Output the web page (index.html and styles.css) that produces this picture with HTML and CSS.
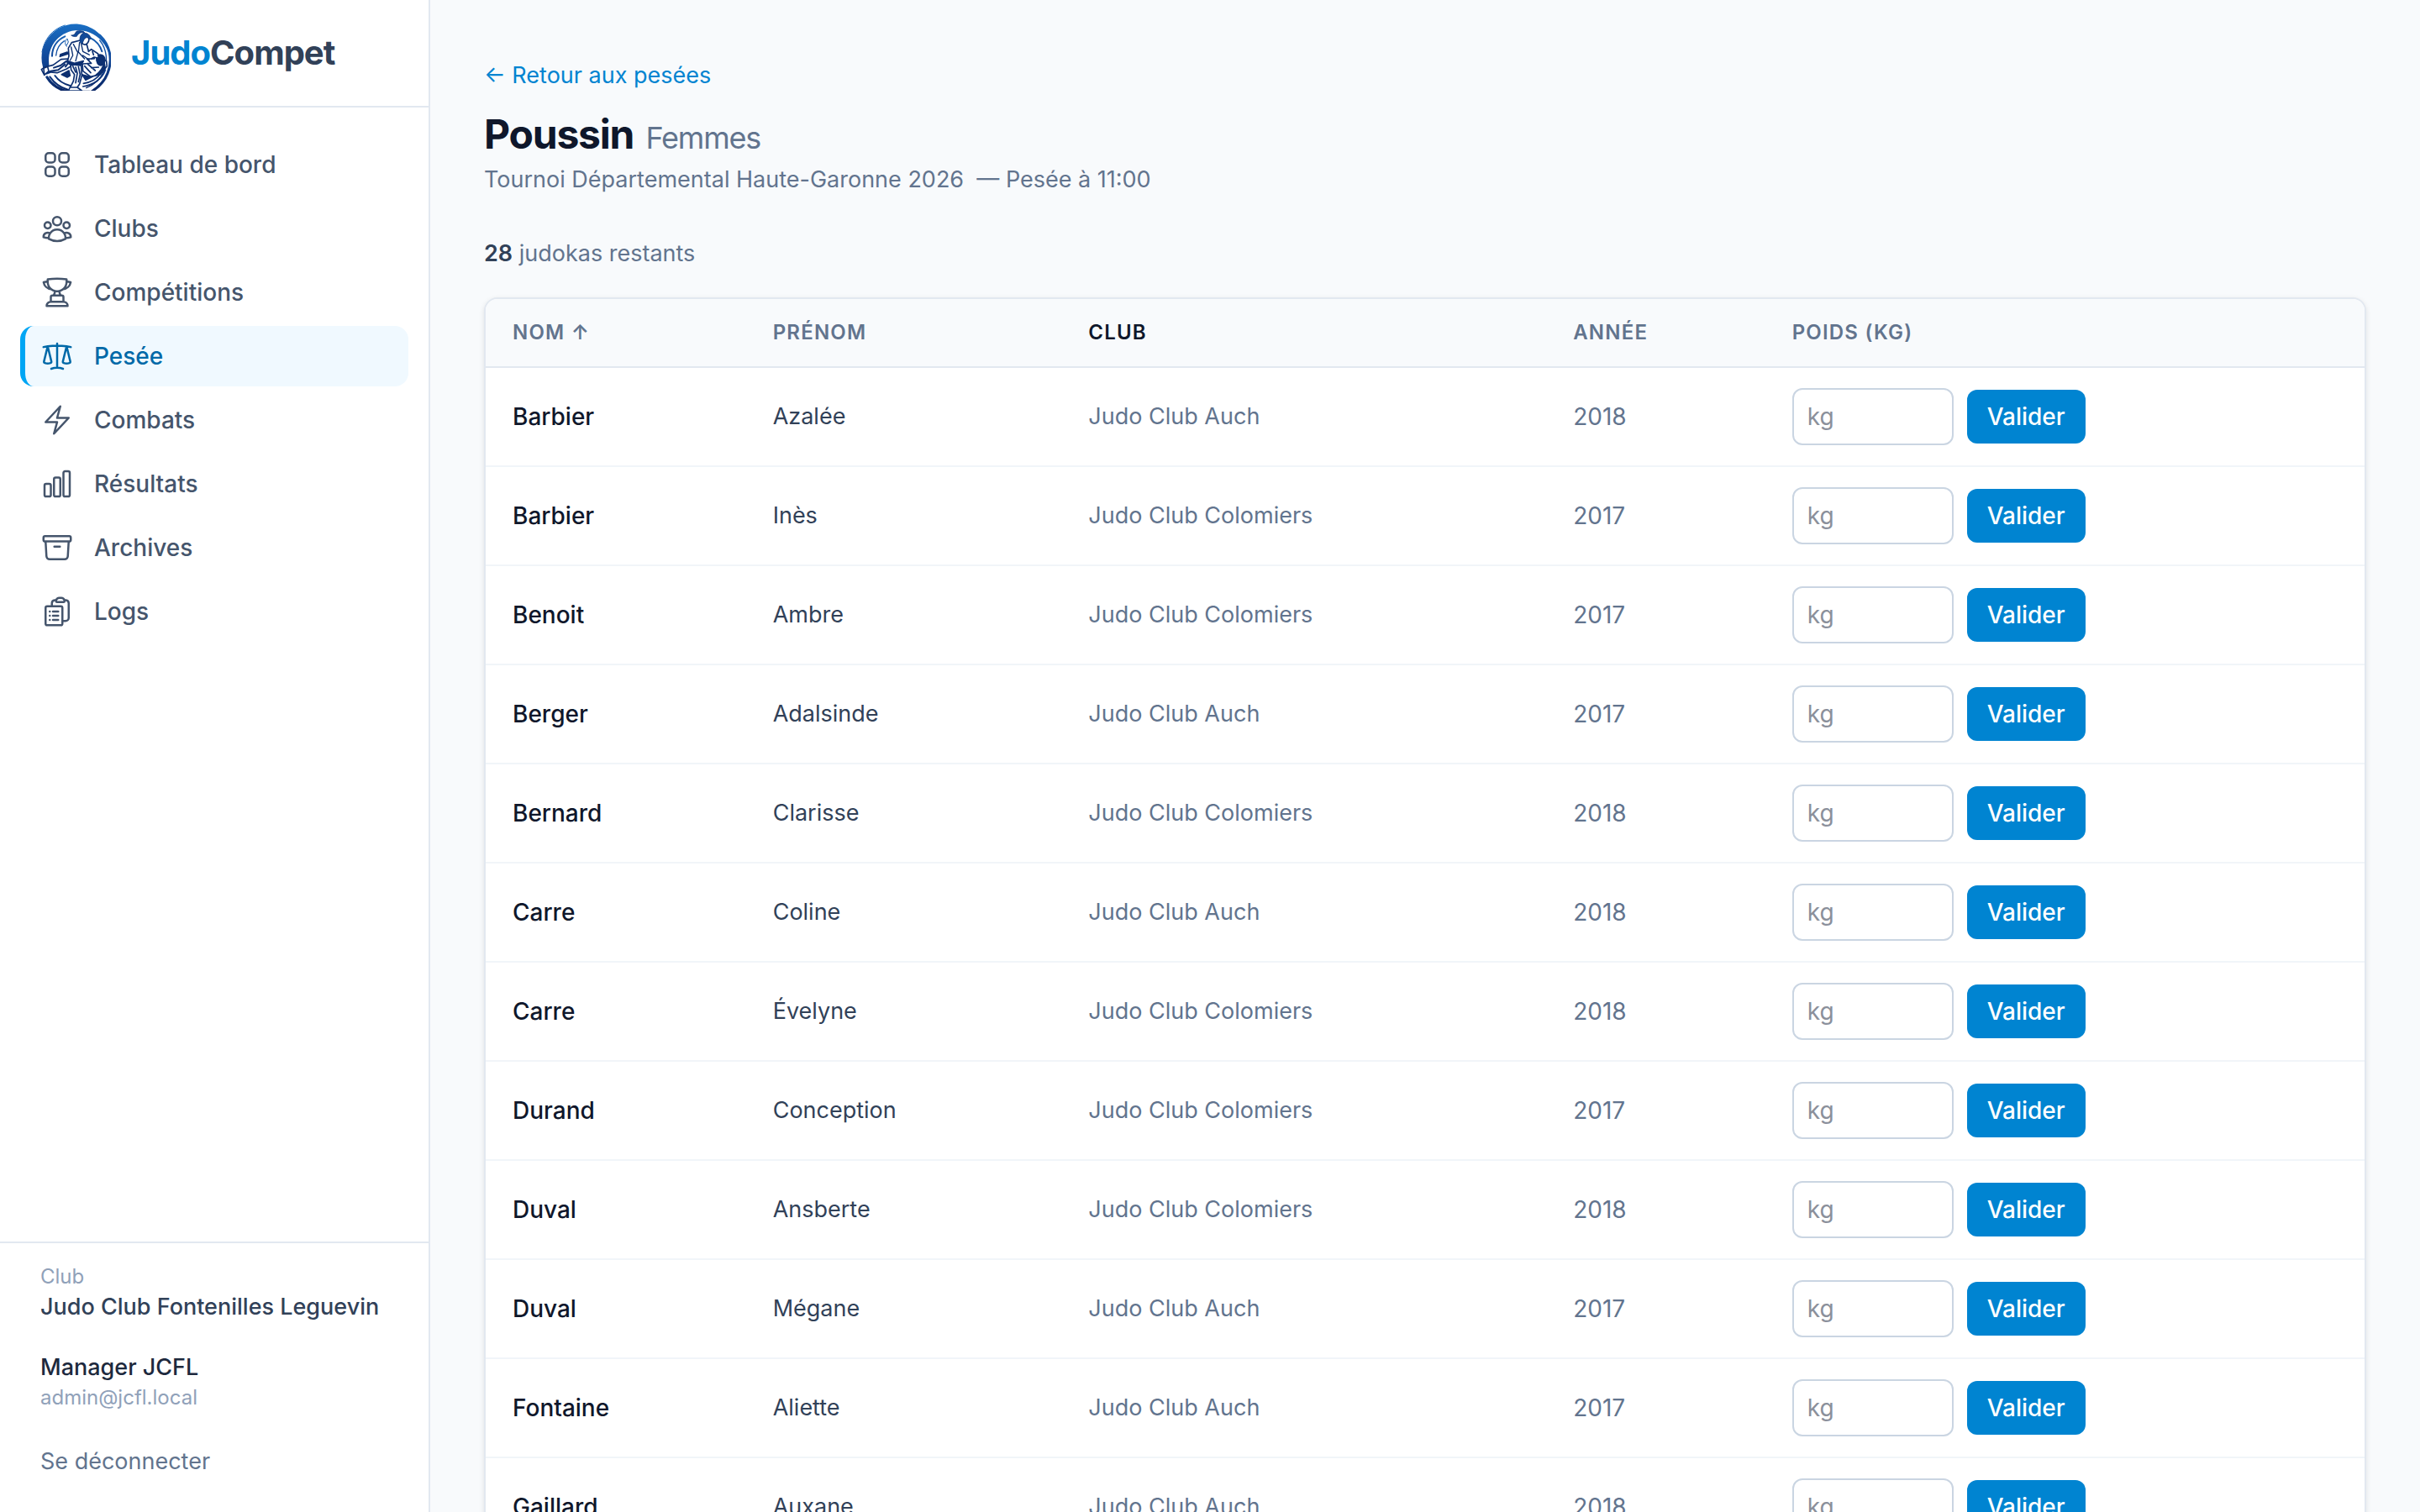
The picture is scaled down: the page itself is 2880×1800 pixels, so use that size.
FILE: index.html
```
<!DOCTYPE html>
<html lang="fr">
<head>
    <meta charset="UTF-8">
    <meta name="viewport" content="width=device-width, initial-scale=1.0">
    <title>JudoCompet - Pesée</title>
    <link rel="stylesheet" href="styles.css">
</head>
<body>

    <!-- Sidebar -->
    <aside class="sidebar">
        <a href="#" class="brand">
            <svg class="brand-logo" viewBox="24 -9 252 276" aria-hidden="true">
                <defs>
                    <linearGradient id="ring" x1="0" y1="24" x2="0" y2="264" gradientUnits="userSpaceOnUse">
                        <stop offset="0" stop-color="#1a6fc4"/>
                        <stop offset="0.5" stop-color="#10489a"/>
                        <stop offset="1" stop-color="#0a2766"/>
                    </linearGradient>
                    <clipPath id="crop"><rect x="24" y="24" width="252" height="240"/></clipPath>
                </defs>
                <g clip-path="url(#crop)" fill="none" stroke="url(#ring)" stroke-linecap="round">
                    <!-- Ring -->
                    <path d="M46 206C12 156 28 78 88 42C108 30 134 24 160 26C216 31 266 76 273 138C258 100 236 70 200 56C157 38 110 50 80 84C52 116 48 160 62 200Z" fill="url(#ring)" stroke="none"/>
                    <path d="M30 126C38 80 66 44 112 30" stroke-width="3"/>
                    <path d="M236 66C272 100 284 152 264 202C254 228 234 250 206 268" stroke-width="9"/>
                    <path d="M236 84C262 116 266 160 250 196C238 224 214 244 188 254" stroke-width="4"/>
                    <path d="M66 140C66 108 84 82 112 70M204 76C224 86 238 104 244 124" stroke-width="6"/>
                    <path d="M80 138C82 116 94 96 110 86" stroke-width="4"/>
                    <path d="M58 214C72 234 92 252 122 260M76 210C90 230 108 240 130 246" stroke-width="6"/>
                    <path d="M48 216C64 242 92 262 130 268H200" stroke-width="10"/>
                    <path d="M178 238C206 234 228 220 240 202M176 249C214 244 244 222 256 190" stroke-width="5"/>
                    <path d="M118 106C110 98 112 84 120 78L124 90L118 102" stroke-width="3"/>
                </g>
                <g clip-path="url(#crop)" fill="#fff" stroke="#0c2f70" stroke-width="5" stroke-linejoin="round" stroke-linecap="round">
                    <!-- Thrown fighter -->
                    <path d="M206 144L228 136L260 158L262 176L238 206L204 214L176 194L174 166Z"/>
                    <path d="M228 140C236 130 252 138 254 150C256 164 246 178 234 172C224 164 222 148 228 140Z" fill="#0c2f70"/>
                    <path d="M252 164L256 184L236 204L222 208C238 196 248 184 252 164Z" fill="#0c2f70"/>
                    <path d="M172 204L186 226L210 214" fill="#0c2f70"/>
                    <path d="M182 176L204 200M194 170L220 192M206 182L232 180"/>
                    <!-- Legs -->
                    <path d="M124 150L98 152L70 172L40 180L28 188L36 204L46 196L84 200L118 186L140 172Z"/>
                    <path d="M36 184L50 178L54 194L38 208Z"/>
                    <path d="M118 158L96 174L72 182M112 170L88 190L60 194M126 162L114 178" stroke-width="6"/>
                    <path d="M100 206L126 192L130 210L120 216Z" fill="#0c2f70"/>
                    <path d="M132 168L170 170L172 210L164 240L148 264L130 254L142 230L146 206L134 190Z"/>
                    <path d="M150 180L156 202L150 236M160 178L166 206L160 232M140 176L150 198" stroke-width="5"/>
                    <path d="M130 252L156 252L172 264H124Z"/>
                    <!-- Standing fighter -->
                    <path d="M136 92L166 84L190 100L196 122L222 134L216 150L190 150L206 166L176 168L136 172L120 164L126 140L124 112Z"/>
                    <path d="M124 132L94 142L96 134L120 126ZM120 158L146 166L178 158L168 174L130 170Z" fill="#0c2f70"/>
                    <path d="M142 98L158 128L150 158M164 92L160 126L182 150M134 108L140 138L130 156M170 96L176 124L200 136M176 138L198 154" stroke-width="4"/>
                    <path d="M196 124L206 116L230 132L232 148L216 144L206 150M210 124L214 136"/>
                    <path d="M178 70C190 62 202 72 196 88C192 100 178 104 172 92Z"/>
                    <path d="M166 92C162 74 168 60 180 58C172 54 160 58 154 70C148 72 138 70 134 66C142 66 148 62 150 56C152 48 166 48 178 52L184 58C198 60 204 70 204 80L190 74C180 76 178 86 174 96Z" fill="#124a98" stroke-width="2"/>
                </g>
            </svg>
            <span class="brand-name"><span class="brand-accent">Judo</span>Compet</span>
        </a>

        <nav class="nav">
            <a href="#" class="nav-link">
                <svg class="nav-icon" viewBox="0 0 24 24"><path d="M3.75 6A2.25 2.25 0 0 1 6 3.75h2.25A2.25 2.25 0 0 1 10.5 6v2.25a2.25 2.25 0 0 1-2.25 2.25H6a2.25 2.25 0 0 1-2.25-2.25V6ZM3.75 15.75A2.25 2.25 0 0 1 6 13.5h2.25a2.25 2.25 0 0 1 2.25 2.25V18a2.25 2.25 0 0 1-2.25 2.25H6A2.25 2.25 0 0 1 3.75 18v-2.25ZM13.5 6a2.25 2.25 0 0 1 2.25-2.25H18A2.25 2.25 0 0 1 20.25 6v2.25A2.25 2.25 0 0 1 18 10.5h-2.25a2.25 2.25 0 0 1-2.25-2.25V6ZM13.5 15.75a2.25 2.25 0 0 1 2.25-2.25H18a2.25 2.25 0 0 1 2.25 2.25V18A2.25 2.25 0 0 1 18 20.25h-2.25A2.25 2.25 0 0 1 13.5 18v-2.25Z"/></svg>
                Tableau de bord
            </a>
            <a href="#" class="nav-link">
                <svg class="nav-icon" viewBox="0 0 24 24"><path d="M18 18.72a9.094 9.094 0 0 0 3.741-.479 3 3 0 0 0-4.682-2.72m.94 3.198.001.031c0 .225-.012.447-.037.666A11.944 11.944 0 0 1 12 21c-2.17 0-4.207-.576-5.963-1.584A6.062 6.062 0 0 1 6 18.719m12 0a5.971 5.971 0 0 0-.941-3.197m0 0A5.995 5.995 0 0 0 12 12.75a5.995 5.995 0 0 0-5.058 2.772m0 0a3 3 0 0 0-4.681 2.72 8.986 8.986 0 0 0 3.74.477m.94-3.197a5.971 5.971 0 0 0-.94 3.197M15 6.75a3 3 0 1 1-6 0 3 3 0 0 1 6 0Zm6 3a2.25 2.25 0 1 1-4.5 0 2.25 2.25 0 0 1 4.5 0Zm-13.5 0a2.25 2.25 0 1 1-4.5 0 2.25 2.25 0 0 1 4.5 0Z"/></svg>
                Clubs
            </a>
            <a href="#" class="nav-link">
                <svg class="nav-icon" viewBox="0 0 24 24"><path d="M16.5 18.75h-9m9 0a3 3 0 0 1 3 3h-15a3 3 0 0 1 3-3m9 0v-3.375c0-.621-.503-1.125-1.125-1.125h-.871M7.5 18.75v-3.375c0-.621.504-1.125 1.125-1.125h.872m5.007 0H9.497m5.007 0a7.454 7.454 0 0 1-.982-3.172M9.497 14.25a7.454 7.454 0 0 0 .981-3.172M5.25 4.236c-.982.143-1.954.317-2.916.52A6.003 6.003 0 0 0 7.73 9.728M5.25 4.236V4.5c0 2.108.966 3.99 2.48 5.228M5.25 4.236V2.721C7.456 2.41 9.71 2.25 12 2.25c2.291 0 4.545.16 6.75.47v1.516M7.73 9.728a6.726 6.726 0 0 0 2.748 1.35m8.272-6.842V4.5c0 2.108-.966 3.99-2.48 5.228m2.48-5.492a46.32 46.32 0 0 1 2.916.52 6.003 6.003 0 0 1-5.395 4.972m0 0a6.726 6.726 0 0 1-2.749 1.35m0 0a6.772 6.772 0 0 1-3.044 0"/></svg>
                Compétitions
            </a>
            <a href="#" class="nav-link active">
                <svg class="nav-icon" viewBox="0 0 24 24"><path d="M12 3v17.25m0 0c-1.472 0-2.882.265-4.185.75M12 20.25c1.472 0 2.882.265 4.185.75M18.75 4.97A48.416 48.416 0 0 0 12 4.5c-2.291 0-4.545.16-6.75.47m13.5 0c1.01.143 2.01.317 3 .52m-3-.52 2.62 10.726c.122.499-.106 1.028-.589 1.202a5.988 5.988 0 0 1-2.031.352 5.988 5.988 0 0 1-2.031-.352c-.483-.174-.711-.703-.59-1.202L18.75 4.971Zm-16.5.52c.99-.203 1.99-.377 3-.52m0 0 2.62 10.726c.122.499-.106 1.028-.589 1.202a5.989 5.989 0 0 1-2.031.352 5.989 5.989 0 0 1-2.031-.352c-.483-.174-.711-.703-.59-1.202L5.25 4.971Z"/></svg>
                Pesée
            </a>
            <a href="#" class="nav-link">
                <svg class="nav-icon" viewBox="0 0 24 24"><path d="m3.75 13.5 10.5-11.25L12 10.5h8.25L9.75 21.75 12 13.5H3.75Z"/></svg>
                Combats
            </a>
            <a href="#" class="nav-link">
                <svg class="nav-icon" viewBox="0 0 24 24"><path d="M3 13.125C3 12.504 3.504 12 4.125 12h2.25c.621 0 1.125.504 1.125 1.125v6.75C7.5 20.496 6.996 21 6.375 21h-2.25A1.125 1.125 0 0 1 3 19.875v-6.75ZM9.75 8.625c0-.621.504-1.125 1.125-1.125h2.25c.621 0 1.125.504 1.125 1.125v11.25c0 .621-.504 1.125-1.125 1.125h-2.25a1.125 1.125 0 0 1-1.125-1.125V8.625ZM16.5 4.125c0-.621.504-1.125 1.125-1.125h2.25C20.496 3 21 3.504 21 4.125v15.75c0 .621-.504 1.125-1.125 1.125h-2.25a1.125 1.125 0 0 1-1.125-1.125V4.125Z"/></svg>
                Résultats
            </a>
            <a href="#" class="nav-link">
                <svg class="nav-icon" viewBox="0 0 24 24"><path d="m20.25 7.5-.625 10.632a2.25 2.25 0 0 1-2.247 2.118H6.622a2.25 2.25 0 0 1-2.247-2.118L3.75 7.5M10 11.25h4M3.375 7.5h17.25c.621 0 1.125-.504 1.125-1.125v-1.5c0-.621-.504-1.125-1.125-1.125H3.375c-.621 0-1.125.504-1.125 1.125v1.5c0 .621.504 1.125 1.125 1.125Z"/></svg>
                Archives
            </a>
            <a href="#" class="nav-link">
                <svg class="nav-icon" viewBox="0 0 24 24"><path d="M9 12h3.75M9 15h3.75M9 18h3.75m3 .75H18a2.25 2.25 0 0 0 2.25-2.25V6.108c0-1.135-.845-2.098-1.976-2.192a48.424 48.424 0 0 0-1.123-.08m-5.801 0c-.065.21-.1.433-.1.664 0 .414.336.75.75.75h4.5a.75.75 0 0 0 .75-.75 2.25 2.25 0 0 0-.1-.664m-5.8 0A2.251 2.251 0 0 1 13.5 2.25H15c1.012 0 1.867.668 2.15 1.586m-5.8 0c-.376.023-.75.05-1.124.08C9.095 4.01 8.25 4.973 8.25 6.108V8.25m0 0H4.875c-.621 0-1.125.504-1.125 1.125v11.25c0 .621.504 1.125 1.125 1.125h9.75c.621 0 1.125-.504 1.125-1.125V9.375c0-.621-.504-1.125-1.125-1.125H8.25ZM6.75 12h.008v.008H6.75V12Zm0 3h.008v.008H6.75V15Zm0 3h.008v.008H6.75V18Z"/></svg>
                Logs
            </a>
        </nav>

        <div class="account">
            <div>
                <p class="small">Club</p>
                <p class="club-name">Judo Club Fontenilles Leguevin</p>
            </div>
            <div>
                <p class="user-name">Manager JCFL</p>
                <p class="small">admin@jcfl.local</p>
            </div>
            <button type="button" class="logout">Se déconnecter</button>
        </div>
    </aside>

    <!-- Main Content -->
    <main class="content">
        <a href="#" class="back">← Retour aux pesées</a>
        <h1>Poussin <span class="category">Femmes</span></h1>
        <p class="event">Tournoi Départemental Haute-Garonne 2026 &nbsp;— Pesée à 11:00</p>
        <p class="remaining"><strong>28</strong> judokas restants</p>

        <div class="card">
            <table class="judokas">
                <thead>
                    <tr>
                        <th class="col-nom"><button type="button" class="sort">Nom ↑</button></th>
                        <th class="col-prenom"><button type="button" class="sort">Prénom</button></th>
                        <th class="col-club"><button type="button" class="sort current">Club</button></th>
                        <th class="col-annee"><button type="button" class="sort">Année</button></th>
                        <th>Poids (kg)</th>
                    </tr>
                </thead>
                <tbody>
                    <tr>
                        <td class="nom">Barbier</td>
                        <td class="prenom">Azalée</td>
                        <td>Judo Club Auch</td>
                        <td class="annee">2018</td>
                        <td><form class="weigh"><input type="text" placeholder="kg" aria-label="Poids de Azalée Barbier"><button type="button" class="validate">Valider</button></form></td>
                    </tr>
                    <tr>
                        <td class="nom">Barbier</td>
                        <td class="prenom">Inès</td>
                        <td>Judo Club Colomiers</td>
                        <td class="annee">2017</td>
                        <td><form class="weigh"><input type="text" placeholder="kg" aria-label="Poids de Inès Barbier"><button type="button" class="validate">Valider</button></form></td>
                    </tr>
                    <tr>
                        <td class="nom">Benoit</td>
                        <td class="prenom">Ambre</td>
                        <td>Judo Club Colomiers</td>
                        <td class="annee">2017</td>
                        <td><form class="weigh"><input type="text" placeholder="kg" aria-label="Poids de Ambre Benoit"><button type="button" class="validate">Valider</button></form></td>
                    </tr>
                    <tr>
                        <td class="nom">Berger</td>
                        <td class="prenom">Adalsinde</td>
                        <td>Judo Club Auch</td>
                        <td class="annee">2017</td>
                        <td><form class="weigh"><input type="text" placeholder="kg" aria-label="Poids de Adalsinde Berger"><button type="button" class="validate">Valider</button></form></td>
                    </tr>
                    <tr>
                        <td class="nom">Bernard</td>
                        <td class="prenom">Clarisse</td>
                        <td>Judo Club Colomiers</td>
                        <td class="annee">2018</td>
                        <td><form class="weigh"><input type="text" placeholder="kg" aria-label="Poids de Clarisse Bernard"><button type="button" class="validate">Valider</button></form></td>
                    </tr>
                    <tr>
                        <td class="nom">Carre</td>
                        <td class="prenom">Coline</td>
                        <td>Judo Club Auch</td>
                        <td class="annee">2018</td>
                        <td><form class="weigh"><input type="text" placeholder="kg" aria-label="Poids de Coline Carre"><button type="button" class="validate">Valider</button></form></td>
                    </tr>
                    <tr>
                        <td class="nom">Carre</td>
                        <td class="prenom">Évelyne</td>
                        <td>Judo Club Colomiers</td>
                        <td class="annee">2018</td>
                        <td><form class="weigh"><input type="text" placeholder="kg" aria-label="Poids de Évelyne Carre"><button type="button" class="validate">Valider</button></form></td>
                    </tr>
                    <tr>
                        <td class="nom">Durand</td>
                        <td class="prenom">Conception</td>
                        <td>Judo Club Colomiers</td>
                        <td class="annee">2017</td>
                        <td><form class="weigh"><input type="text" placeholder="kg" aria-label="Poids de Conception Durand"><button type="button" class="validate">Valider</button></form></td>
                    </tr>
                    <tr>
                        <td class="nom">Duval</td>
                        <td class="prenom">Ansberte</td>
                        <td>Judo Club Colomiers</td>
                        <td class="annee">2018</td>
                        <td><form class="weigh"><input type="text" placeholder="kg" aria-label="Poids de Ansberte Duval"><button type="button" class="validate">Valider</button></form></td>
                    </tr>
                    <tr>
                        <td class="nom">Duval</td>
                        <td class="prenom">Mégane</td>
                        <td>Judo Club Auch</td>
                        <td class="annee">2017</td>
                        <td><form class="weigh"><input type="text" placeholder="kg" aria-label="Poids de Mégane Duval"><button type="button" class="validate">Valider</button></form></td>
                    </tr>
                    <tr>
                        <td class="nom">Fontaine</td>
                        <td class="prenom">Aliette</td>
                        <td>Judo Club Auch</td>
                        <td class="annee">2017</td>
                        <td><form class="weigh"><input type="text" placeholder="kg" aria-label="Poids de Aliette Fontaine"><button type="button" class="validate">Valider</button></form></td>
                    </tr>
                    <tr>
                        <td class="nom">Gaillard</td>
                        <td class="prenom">Auxane</td>
                        <td>Judo Club Auch</td>
                        <td class="annee">2018</td>
                        <td><form class="weigh"><input type="text" placeholder="kg" aria-label="Poids de Auxane Gaillard"><button type="button" class="validate">Valider</button></form></td>
                    </tr>
                </tbody>
            </table>
        </div>
    </main>

</body>
</html>
```
FILE: styles.css
```
* {
    box-sizing: border-box;
    margin: 0;
    padding: 0;
}

body {
    display: flex;
    height: 100vh;
    overflow: hidden;
    font-family: Inter, "Liberation Sans", sans-serif;
    font-size: 27px;
    line-height: 40px;
    color: #0f172b;
    background-color: #f8fafc;
}

a {
    text-decoration: none;
}

button, input {
    font: inherit;
    color: inherit;
}

button {
    border: none;
    background: none;
    cursor: pointer;
}

/* Sidebar */
.sidebar {
    display: flex;
    flex-direction: column;
    flex-shrink: 0;
    width: 512px;
    background-color: white;
    border-right: 2px solid #e2e8f0;
}

.brand {
    display: flex;
    align-items: center;
    gap: 24px;
    height: 128px;
    padding: 0 48px;
    border-bottom: 2px solid #e2e8f0;
    color: #314158;
}

.brand-logo {
    width: 84px;
    height: 92px;
}

.brand-name {
    font-size: 40px;
    font-weight: 700;
    letter-spacing: -0.025em;
}

.brand-accent {
    color: #0084d1;
}

.nav {
    display: flex;
    flex-direction: column;
    flex: 1;
    gap: 4px;
    padding: 32px 24px;
}

.nav-link {
    display: flex;
    align-items: center;
    gap: 24px;
    padding: 16px 24px 16px 18px;
    border-left: 6px solid transparent;
    border-radius: 16px;
    font-size: 28px;
    font-weight: 500;
    color: #45556c;
}

.nav-link:hover {
    background-color: #f1f5f9;
}

.nav-link.active {
    background-color: #f0f9ff;
    border-left-color: #00a6f4;
    color: #0069a8;
}

.nav-icon {
    width: 40px;
    height: 40px;
    fill: none;
    stroke: currentColor;
    stroke-width: 1.5;
    stroke-linecap: round;
    stroke-linejoin: round;
}

.account {
    display: flex;
    flex-direction: column;
    gap: 32px;
    padding: 24px 48px 40px;
    border-top: 2px solid #e2e8f0;
}

.small {
    font-size: 24px;
    line-height: 32px;
    color: #90a1b9;
}

.club-name {
    font-weight: 500;
    color: #314158;
}

.user-name {
    font-weight: 500;
    color: #1d293d;
}

.logout {
    margin-top: 8px;
    text-align: left;
    color: #62748e;
}

/* Main Content */
.content {
    flex: 1;
    min-width: 0;
    padding: 70px 64px 64px;
    overflow: hidden;
}

.back {
    display: block;
    color: #0084d1;
}

h1 {
    margin-top: 20px;
    font-size: 48px;
    line-height: 60px;
    font-weight: 700;
    letter-spacing: -0.025em;
}

.category {
    margin-left: 4px;
    font-size: 36px;
    font-weight: 400;
    color: #62748e;
}

.event {
    color: #62748e;
}

.remaining {
    margin: 48px 0 32px;
    color: #62748e;
}

.remaining strong {
    font-weight: 600;
    color: #314158;
}

.card {
    overflow: hidden;
    background-color: white;
    border: 2px solid #e2e8f0;
    border-radius: 16px;
    box-shadow: 0 2px 6px rgba(0, 0, 0, 0.1);
}

/* Table Styling */
.judokas {
    width: 100%;
    table-layout: fixed;
    border-collapse: separate;
    border-spacing: 0;
}

.col-nom {
    width: 13.85%;
}

.col-prenom {
    width: 16.8%;
}

.col-club {
    width: 25.8%;
}

.col-annee {
    width: 11.65%;
}

th, td {
    padding: 24px 32px;
    text-align: left;
}

th {
    font-size: 24px;
    line-height: 32px;
    font-weight: 600;
    letter-spacing: 0.05em;
    text-transform: uppercase;
    color: #62748e;
    background-color: #f8fafc;
    border-bottom: 2px solid #e2e8f0;
}

td {
    color: #62748e;
    border-bottom: 2px solid #f1f5f9;
}

.sort {
    display: block;
    letter-spacing: inherit;
    text-transform: inherit;
}

.sort.current, .sort:hover {
    color: #0f172b;
}

.nom {
    font-size: 28px;
    font-weight: 500;
    color: #0f172b;
}

.prenom {
    color: #314158;
}

.annee {
    font-size: 28px;
}

/* Weight form */
.weigh {
    display: flex;
    align-items: center;
    gap: 16px;
    font-size: 28px;
}

.weigh input {
    width: 192px;
    height: 68px;
    padding: 0 16px;
    border: 2px solid #cad5e2;
    border-radius: 12px;
    background-color: white;
    color: #0f172b;
}

.weigh input::placeholder {
    color: #8b909b;
}

.validate {
    padding: 12px 24px;
    border-radius: 12px;
    font-weight: 500;
    color: white;
    background-color: #0084d1;
}

.validate:hover {
    background-color: #0069a8;
}
```
